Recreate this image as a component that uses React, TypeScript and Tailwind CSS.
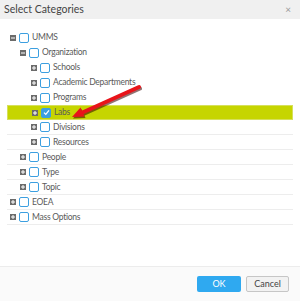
import React from 'react';

type Node = {
  label: string;
  level: 0 | 1 | 2;
  open?: boolean;
  checked?: boolean;
  active?: boolean;
  line?: boolean;
};

const rows: Node[] = [
  { label: 'UMMS', level: 0, open: true },
  { label: 'Organization', level: 1, open: true },
  { label: 'Schools', level: 2 },
  { label: 'Academic Departments', level: 2 },
  { label: 'Programs', level: 2 },
  { label: 'Labs', level: 2, checked: true, active: true },
  { label: 'Divisions', level: 2, line: true },
  { label: 'Resources', level: 2, line: true },
  { label: 'People', level: 1, line: true },
  { label: 'Type', level: 1, line: true },
  { label: 'Topic', level: 1, line: true },
  { label: 'EOEA', level: 0, line: true },
  { label: 'Mass Options', level: 0, line: true },
];

const indent = ['pl-[3px]', 'pl-[13px]', 'pl-[24px]'];

function Toggle({ open }: { open?: boolean }) {
  return (
    <svg width="6" height="6" viewBox="0 0 6 6" className="shrink-0">
      <rect width="6" height="6" fill="#6b6b6b" />
      <rect x="1" y="2.5" width="4" height="1" fill="#fff" />
      {!open && <rect x="2.5" y="1" width="1" height="4" fill="#fff" />}
    </svg>
  );
}

function Check({ checked }: { checked?: boolean }) {
  return (
    <span className={`w-[10px] h-[10px] shrink-0 rounded-[2px] border-[1.5px] border-[#3c9fe0] flex items-center justify-center ${checked ? 'bg-[#3c9fe0]' : 'bg-white'}`}>
      {checked && (
        <svg width="7" height="7" viewBox="0 0 7 7">
          <path d="M1 3.6 L2.8 5.4 L6 1.4" stroke="#fff" strokeWidth="1.3" fill="none" />
        </svg>
      )}
    </span>
  );
}

function Row({ node }: { node: Node }) {
  return (
    <div
      className={`h-[15px] flex items-center ${indent[node.level]} ${
        node.active ? 'bg-[#c6d500] border border-[#d6e05a]' : node.line ? 'border-b border-[#ededed]' : ''
      }`}
    >
      <Toggle open={node.open} />
      <span className="ml-[3px]">
        <Check checked={node.checked} />
      </span>
      <span className="ml-[3px] text-[8.5px] tracking-[-0.25px] text-[#5a5a5a] leading-none whitespace-nowrap">{node.label}</span>
    </div>
  );
}

export default function App() {
  return (
    <div className="relative w-[300px] h-[301px] bg-white flex flex-col overflow-hidden font-['Lato',sans-serif]">
      {/* Header */}
      <div className="h-[19px] bg-[#f0f0f0] flex items-center justify-between px-[4px]">
        <span className="text-[10.5px] text-[#444]">Select Categories</span>
        <span className="text-[10px] text-[#999] mr-[5px]">×</span>
      </div>

      {/* Tree */}
      <div className="flex-1 pt-[11px] px-[7px]">
        {rows.map((r) => (
          <Row key={r.label} node={r} />
        ))}
      </div>

      {/* Footer */}
      <div className="h-[35px] border-t border-[#ececec] bg-[#fafafa] flex items-center justify-end gap-[5px] pr-[11px]">
        <button className="w-[44px] h-[16px] rounded-[2px] bg-[#2fa9f0] text-white text-[9px]">OK</button>
        <button className="w-[43px] h-[16px] rounded-[2px] bg-[#f2f2f2] border border-[#c6c6c6] text-[#444] text-[9px]">Cancel</button>
      </div>

      {/* Annotation arrow */}
      <svg className="absolute left-0 top-0 pointer-events-none" width="300" height="301">
        <g transform="translate(1,1.5)" opacity="0.55">
          <line x1="139" y1="87" x2="83" y2="112.3" stroke="#3a0000" strokeWidth="4" strokeLinecap="round" />
          <polygon points="72,117 84.5,116.5 80.5,107.5" fill="#3a0000" />
        </g>
        <line x1="139" y1="87" x2="83" y2="112.3" stroke="#e8141a" strokeWidth="4" strokeLinecap="round" />
        <polygon points="72,117 84.5,116.5 80.5,107.5" fill="#e8141a" />
      </svg>
    </div>
  );
}
